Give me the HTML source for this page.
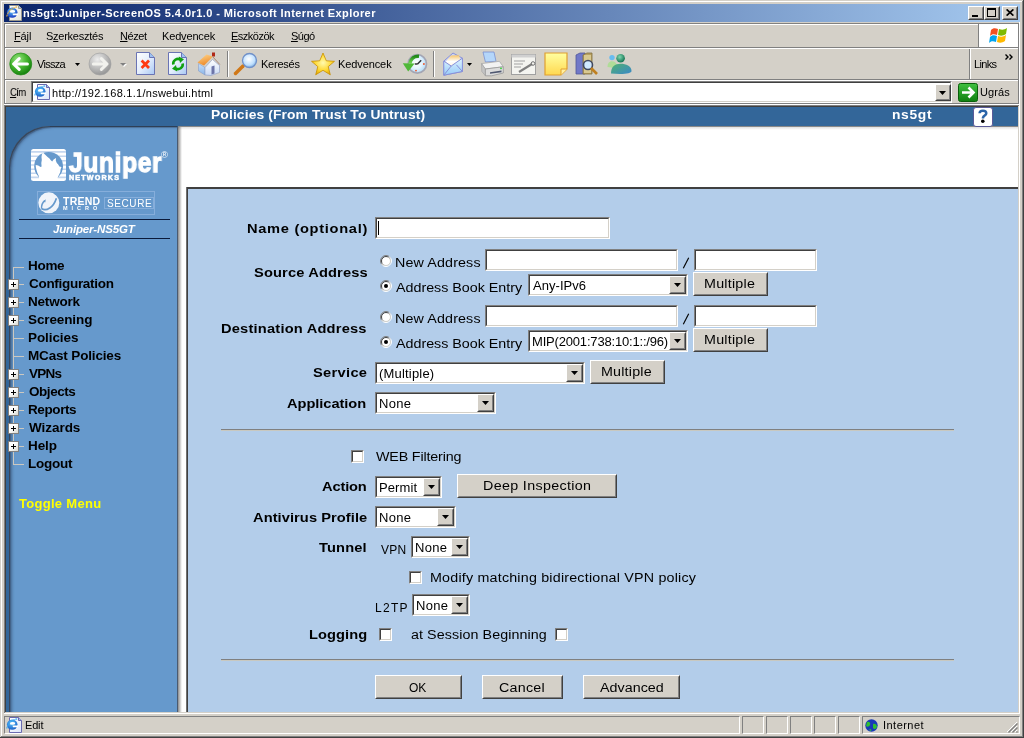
<!DOCTYPE html>
<html><head><meta charset="utf-8"><style>
html,body{margin:0;padding:0}
body{width:1024px;height:738px;overflow:hidden;position:relative;background:#D4D0C8;font-family:"Liberation Sans",sans-serif}
body div, body svg{position:absolute}
body>div[style*="font-family"]{will-change:transform}
u{text-decoration:underline;text-underline-offset:1px}
</style></head><body>
<div style="left:0px;top:0px;width:1024px;height:1px;background:#D4D0C8;"></div>
<div style="left:0px;top:0px;width:1px;height:738px;background:#D4D0C8;"></div>
<div style="left:1px;top:1px;width:1022px;height:1px;background:#fff;"></div>
<div style="left:1px;top:1px;width:1px;height:736px;background:#fff;"></div>
<div style="left:1023px;top:0px;width:1px;height:738px;background:#404040;"></div>
<div style="left:0px;top:737px;width:1024px;height:1px;background:#404040;"></div>
<div style="left:1022px;top:1px;width:1px;height:736px;background:#808080;"></div>
<div style="left:1px;top:736px;width:1022px;height:1px;background:#808080;"></div>
<div style="left:4px;top:4px;width:1016px;height:18px;background:linear-gradient(to right,#0A246A,#A6CAF0);"></div>
<svg style="left:6px;top:5px" width="17" height="17" viewBox="0 0 17 17">
<defs><linearGradient id="iep6005" x1="0" y1="0" x2="1" y2="1"><stop offset="0" stop-color="#FFFFFF"/><stop offset="1" stop-color="#E6E4DA"/></linearGradient>
<radialGradient id="iee6005" cx="45%" cy="35%" r="65%"><stop offset="0" stop-color="#60C8FF"/><stop offset="1" stop-color="#1838C0"/></radialGradient></defs>
<path d="M3.5 0.5H12.5L15.5 3.5V15.5H3.5Z" fill="url(#iep6005)" stroke="#9A988C"/>
<path d="M12.5 0.5V3.5H15.5" fill="#A0C0F0" stroke="#9A988C"/>
<ellipse cx="6.2" cy="7.6" rx="5.3" ry="5.2" fill="url(#iee6005)"/>
<ellipse cx="6.4" cy="6.4" rx="2.8" ry="1.3" fill="#fff"/>
<path d="M6.5 8.6H12V10.3H7Z" fill="#fff"/>
<path d="M0.8 11.5C1.5 7 6 2.5 11.5 1.8" stroke="#E8B040" stroke-width="1.1" fill="none" stroke-dasharray="2 0.6"/>
</svg>
<div style="left:968px;top:6px;width:16px;height:14px;box-sizing:border-box;border:1px solid;border-color:#fff #404040 #404040 #fff;"><div style="position:static;box-sizing:border-box;width:100%;height:100%;border:1px solid;border-color:#D4D0C8 #808080 #808080 #D4D0C8;background:#D4D0C8"></div></div>
<div style="left:984px;top:6px;width:16px;height:14px;box-sizing:border-box;border:1px solid;border-color:#fff #404040 #404040 #fff;"><div style="position:static;box-sizing:border-box;width:100%;height:100%;border:1px solid;border-color:#D4D0C8 #808080 #808080 #D4D0C8;background:#D4D0C8"></div></div>
<div style="left:1002px;top:6px;width:16px;height:14px;box-sizing:border-box;border:1px solid;border-color:#fff #404040 #404040 #fff;"><div style="position:static;box-sizing:border-box;width:100%;height:100%;border:1px solid;border-color:#D4D0C8 #808080 #808080 #D4D0C8;background:#D4D0C8"></div></div>
<div style="left:972px;top:15px;width:6px;height:2px;background:#000;"></div>
<div style="left:987px;top:8px;width:9px;height:9px;box-sizing:border-box;border:1px solid #000;border-top-width:2px"></div>
<svg style="left:1006px;top:9px" width="8" height="7" viewBox="0 0 8 7"><path d="M0.6 0.4L7.4 6.6M7.4 0.4L0.6 6.6" stroke="#000" stroke-width="1.7"/></svg>
<div style="left:4px;top:23px;width:1015px;height:1px;background:#808080;"></div>
<div style="left:4px;top:23px;width:1px;height:81px;background:#808080;"></div>
<div style="left:5px;top:24px;width:1014px;height:1px;background:#fff;"></div>
<div style="left:5px;top:24px;width:1px;height:80px;background:#fff;"></div>
<div style="left:5px;top:47px;width:1014px;height:1px;background:#808080;"></div>
<div style="left:5px;top:48px;width:1014px;height:1px;background:#fff;"></div>
<div style="left:5px;top:79px;width:1014px;height:1px;background:#808080;"></div>
<div style="left:5px;top:80px;width:1014px;height:1px;background:#fff;"></div>
<div style="left:5px;top:103px;width:1014px;height:1px;background:#808080;"></div>
<div style="left:4px;top:104px;width:1015px;height:1px;background:#fff;"></div>
<div style="left:1018px;top:23px;width:1px;height:81px;background:#808080;"></div>
<div style="left:1019px;top:22px;width:1px;height:83px;background:#fff;"></div>
<div style="left:979px;top:25px;width:39px;height:22px;background:#fff;"></div>
<div style="left:978px;top:24px;width:1px;height:23px;background:#808080;"></div>
<svg style="left:989px;top:27px" width="20" height="18" viewBox="0 0 20 18">
<path d="M2 3C4 1 6 1 9 2L8 8C5 7 3 7 1 9Z" fill="#F25022"/>
<path d="M10 2C13 3 15 3 18 1L17 7C14 9 12 9 9 8Z" fill="#7FBA00"/>
<path d="M1 10C3 8 5 8 8 9L7 15C4 14 2 14 0 16Z" fill="#00A4EF"/>
<path d="M9 9C12 10 14 10 17 8L16 14C13 16 11 16 8 15Z" fill="#FFB900"/>
</svg>
<div style="left:969px;top:49px;width:1px;height:30px;background:#808080;"></div>
<div style="left:970px;top:49px;width:1px;height:30px;background:#fff;"></div>
<svg style="left:9px;top:52px" width="24" height="24" viewBox="0 0 24 24">
<defs><radialGradient id="gb" cx="38%" cy="30%" r="70%"><stop offset="0" stop-color="#9BE585"/><stop offset="0.55" stop-color="#45B52E"/><stop offset="1" stop-color="#17830F"/></radialGradient></defs>
<circle cx="11.75" cy="12" r="11" fill="url(#gb)" stroke="#238A18" stroke-width="0.7"/>
<path d="M4.6 12L10.2 6.6M4.6 12L10.2 17.4M5.2 12H18.4" stroke="#fff" stroke-width="3.1" stroke-linecap="round" fill="none"/>
</svg>
<svg style="left:75px;top:63px" width="5" height="3"><path d="M0 0H5L2.5 3Z" fill="#000"/></svg>
<svg style="left:88px;top:52px" width="24" height="24" viewBox="0 0 24 24">
<defs><radialGradient id="gf" cx="38%" cy="30%" r="70%"><stop offset="0" stop-color="#EDEDED"/><stop offset="0.55" stop-color="#BEBEBE"/><stop offset="1" stop-color="#979797"/></radialGradient></defs>
<circle cx="12" cy="12" r="11" fill="url(#gf)" stroke="#A4A4A4" stroke-width="0.7"/>
<path d="M19 12L13.4 6.6M19 12L13.4 17.4M18.4 12H5.4" stroke="#F2F2EE" stroke-width="3.1" stroke-linecap="round" fill="none"/>
</svg>
<svg style="left:120px;top:63px" width="7" height="5"><path d="M1 1H7L4 4Z" fill="#fff"/><path d="M0 0H6L3 3Z" fill="#808080"/></svg>
<svg style="left:136px;top:52px" width="20" height="23" viewBox="0 0 20 23">
<defs><linearGradient id="dg136" x1="0" y1="0" x2="1" y2="1"><stop offset="0" stop-color="#FFFFFF"/><stop offset="0.5" stop-color="#E4EEFC"/><stop offset="1" stop-color="#A8C8F4"/></linearGradient></defs>
<path d="M0.5 0.5H13.5L18.5 5.5V22.5H0.5Z" fill="url(#dg136)" stroke="#6A74B4"/>
<path d="M13.5 0.5V5.5H18.5" fill="#9EC2F0" stroke="#6A74B4"/>
<path d="M5.6 8.6L13 16M13 8.6L5.6 16" stroke="#FF3A12" stroke-width="2.8"/></svg>
<svg style="left:168px;top:52px" width="20" height="23" viewBox="0 0 20 23">
<defs><linearGradient id="dg168" x1="0" y1="0" x2="1" y2="1"><stop offset="0" stop-color="#FFFFFF"/><stop offset="0.5" stop-color="#E4EEFC"/><stop offset="1" stop-color="#A8C8F4"/></linearGradient></defs>
<path d="M0.5 0.5H13.5L18.5 5.5V22.5H0.5Z" fill="url(#dg168)" stroke="#6A74B4"/>
<path d="M13.5 0.5V5.5H18.5" fill="#9EC2F0" stroke="#6A74B4"/>

<path d="M5.3 12.5A4.8 4.8 0 0 1 12.5 7.6" stroke="#10A010" stroke-width="2.6" fill="none"/>
<path d="M10.8 4.6L16 7.2L12 11Z" fill="#10A010"/>
<path d="M14.7 11.5A4.8 4.8 0 0 1 7.5 16.4" stroke="#10A010" stroke-width="2.6" fill="none"/>
<path d="M9.2 19.4L4 16.8L8 13Z" fill="#10A010"/>
</svg>
<svg style="left:197px;top:52px" width="24" height="24" viewBox="0 0 24 24">
<defs><linearGradient id="hr" x1="0" y1="0" x2="0.4" y2="1"><stop offset="0" stop-color="#FFD890"/><stop offset="1" stop-color="#EE8A28"/></linearGradient>
<linearGradient id="hw" x1="0" y1="0" x2="0" y2="1"><stop offset="0" stop-color="#FFFFFF"/><stop offset="1" stop-color="#C8D8F4"/></linearGradient>
<linearGradient id="hs" x1="0" y1="0" x2="0" y2="1"><stop offset="0" stop-color="#C8E0FA"/><stop offset="1" stop-color="#88B4E8"/></linearGradient></defs>
<rect x="15" y="0.5" width="3" height="4" fill="#B02818"/>
<path d="M1.5 11.5L8 15.5V23L1.5 19Z" fill="url(#hs)" stroke="#8CA0C8" stroke-width="0.6"/>
<path d="M8 15.5L15.5 7.5L22.5 13.5V20.5L14 23.5L8 23Z" fill="url(#hw)" stroke="#8C9CC4" stroke-width="0.6"/>
<path d="M0.5 10.5L9.5 2.5L16 4.5L7 13.5Z" fill="url(#hr)"/>
<path d="M15.5 4.5L22.8 12.5" stroke="#A88878" stroke-width="1"/>
<path d="M14.5 14.5L17.5 13.5V21.5L14.5 22.5Z" fill="#6C74A8"/>
</svg>
<div style="left:227px;top:51px;width:1px;height:26px;background:#808080;"></div>
<div style="left:228px;top:51px;width:1px;height:26px;background:#fff;"></div>
<svg style="left:233px;top:52px" width="26" height="24" viewBox="0 0 26 24">
<defs><radialGradient id="sl" cx="45%" cy="40%" r="60%"><stop offset="0" stop-color="#FFFFFF"/><stop offset="0.7" stop-color="#BFE0FF"/><stop offset="1" stop-color="#80B0E0"/></radialGradient></defs>
<path d="M2.5 21.5L10 14" stroke="#D07818" stroke-width="3.5" stroke-linecap="round"/>
<circle cx="16.5" cy="8.5" r="7" fill="url(#sl)" stroke="#7090C8" stroke-width="1.3"/>
</svg>
<svg style="left:310px;top:52px" width="26" height="24" viewBox="0 0 26 24">
<defs><radialGradient id="st" cx="50%" cy="45%" r="60%"><stop offset="0" stop-color="#FFFAB0"/><stop offset="0.6" stop-color="#FFD830"/><stop offset="1" stop-color="#E0A000"/></radialGradient></defs>
<path d="M13 1L16.3 8.8L24.5 9.3L18.2 14.6L20.3 22.8L13 18.3L5.7 22.8L7.8 14.6L1.5 9.3L9.7 8.8Z" fill="url(#st)" stroke="#C89000" stroke-width="0.8" stroke-linejoin="round"/>
</svg>
<svg style="left:402px;top:53px" width="26" height="23" viewBox="0 0 26 23">
<defs><radialGradient id="hc" cx="45%" cy="45%" r="60%"><stop offset="0" stop-color="#FFFFFF"/><stop offset="0.5" stop-color="#E4F4FF"/><stop offset="1" stop-color="#A8D4F4"/></radialGradient>
<linearGradient id="ha" x1="0" y1="0" x2="0" y2="1"><stop offset="0" stop-color="#208A18"/><stop offset="1" stop-color="#78D858"/></linearGradient></defs>
<circle cx="15.3" cy="10.9" r="9.2" fill="url(#hc)" stroke="#A4A6B4" stroke-width="1.7"/>
<path d="M15.6 11L19.2 7.2M15.6 11L12.8 11" stroke="#303438" stroke-width="1.5"/>
<circle cx="21.9" cy="11" r="0.9" fill="#F05020"/><circle cx="14" cy="17.6" r="0.9" fill="#F05020"/>
<path d="M17 3.3C12.5 3 8.8 5.5 7.8 10.5" stroke="url(#ha)" stroke-width="3.6" fill="none"/>
<path d="M0.8 10.2L12.6 10.6L6.2 18.4Z" fill="#50B838"/>
</svg>
<div style="left:433px;top:51px;width:1px;height:26px;background:#808080;"></div>
<div style="left:434px;top:51px;width:1px;height:26px;background:#fff;"></div>
<svg style="left:442px;top:52px" width="23" height="25" viewBox="0 0 23 25">
<defs><linearGradient id="mb" x1="0" y1="0" x2="0" y2="1"><stop offset="0" stop-color="#E0F4FF"/><stop offset="1" stop-color="#98CCF8"/></linearGradient>
<linearGradient id="ml" x1="0" y1="0" x2="0" y2="1"><stop offset="0" stop-color="#F8C468"/><stop offset="0.55" stop-color="#FFFFFF"/><stop offset="1" stop-color="#FFF4E0"/></linearGradient></defs>
<path d="M1.8 9.1L11 1L20.4 6.2V19.5L1.8 23.2Z" fill="#C8D4F4" stroke="#8890D8"/>
<path d="M3.5 10L9 3.5L17 3.2L19 9L9.5 14.5Z" fill="url(#ml)"/>
<path d="M1.8 9.1L9.2 14L20.4 6.2V19.5L1.8 23.2Z" fill="url(#mb)" stroke="#8890D8" stroke-linejoin="round"/>
<path d="M1.8 23.2L9.2 14M20.4 19.5L14.4 12.8" stroke="#8890D8" fill="none"/>
</svg>
<svg style="left:467px;top:63px" width="5" height="3"><path d="M0 0H5L2.5 3Z" fill="#000"/></svg>
<svg style="left:480px;top:51px" width="25" height="26" viewBox="0 0 25 26">
<path d="M3 1L14 1L16 10.3L5.4 11Z" fill="#B4D6FA" stroke="#7890D0" stroke-width="0.8"/>
<path d="M1.5 12.6L19.4 10.3L23.3 15.75L5.4 18Z" fill="#F2F2F2" stroke="#A8A8A8" stroke-width="0.8"/>
<path d="M1.5 12.6L5.4 18V24.8L1.8 20.4Z" fill="#C4C4C4" stroke="#A0A0A0" stroke-width="0.6"/>
<path d="M5.4 18L23.3 15.75V22L11.6 24.8H5.4Z" fill="#DCDCDC" stroke="#989898" stroke-width="0.8"/>
<path d="M10 21.2L21.5 19.6V21.2L10 22.8Z" fill="#505870"/>
<circle cx="21" cy="17.3" r="0.9" fill="#30D030"/>
</svg>
<svg style="left:511px;top:54px" width="25" height="21" viewBox="0 0 25 21">
<rect x="0.5" y="0.5" width="24" height="20" fill="#F4F4F0" stroke="#A0A0A0"/>
<rect x="0.5" y="0.5" width="24" height="3" fill="#D0D0D0"/>
<path d="M3 7H14M3 10H12M3 13H10" stroke="#A0A0A0"/>
<path d="M8 18L21 10" stroke="#808080" stroke-width="2.2"/>
<circle cx="22" cy="9.5" r="1.8" fill="none" stroke="#707070"/>
</svg>
<svg style="left:544px;top:52px" width="24" height="24" viewBox="0 0 24 24">
<defs><linearGradient id="sn" x1="0" y1="0" x2="0" y2="1"><stop offset="0" stop-color="#FFFFA0"/><stop offset="1" stop-color="#FFD850"/></linearGradient></defs>
<path d="M1 1H23V17L17 23H1Z" fill="url(#sn)" stroke="#E0A030" stroke-width="1.2"/>
<path d="M17 23V17H23" fill="#FFF0A0" stroke="#E0A030"/>
</svg>
<svg style="left:575px;top:52px" width="24" height="23" viewBox="0 0 24 23">
<path d="M1 3L5 1H10V22H1Z" fill="#7078C8" stroke="#505898" stroke-width="0.8"/>
<path d="M8 3L12 1H17V22H8Z" fill="#B8A060" stroke="#807040" stroke-width="0.8"/>
<path d="M9 3H16V21H9Z" fill="#D8C890"/>
<circle cx="13" cy="13" r="4.5" fill="#D0E8FF" stroke="#404860" stroke-width="1.6"/>
<path d="M16 16L22 22" stroke="#C08020" stroke-width="2.6"/>
</svg>
<svg style="left:607px;top:53px" width="26" height="22" viewBox="0 0 26 22">
<defs><radialGradient id="mh" cx="40%" cy="35%" r="60%"><stop offset="0" stop-color="#80D8B0"/><stop offset="1" stop-color="#1A7A58"/></radialGradient>
<linearGradient id="mbd" x1="0" y1="0" x2="1" y2="1"><stop offset="0" stop-color="#50B070"/><stop offset="1" stop-color="#3A88C8"/></linearGradient></defs>
<circle cx="5" cy="4.6" r="2.7" fill="#68BCF0"/>
<path d="M0.5 14C0.5 9.5 2.8 8.2 5 8.2C7.5 8.2 9.5 9.5 10 13L8 15Z" fill="#B0DC98"/>
<circle cx="13.6" cy="5.3" r="4.3" fill="url(#mh)"/>
<path d="M4 20.5C4 13.5 8 10.8 13.6 10.8C19 10.8 24.5 13 24.5 18C24.5 20 20 21 13 21Z" fill="url(#mbd)"/>
</svg>
<svg style="left:1005px;top:54px" width="10" height="6" viewBox="0 0 10 6"><path d="M0.5 0.5L3 3L0.5 5.5M4.5 0.5L7 3L4.5 5.5" stroke="#000" stroke-width="1.4" fill="none"/></svg>
<div style="left:31px;top:81px;width:921px;height:22px;box-sizing:border-box;border:1px solid;border-color:#808080 #fff #fff #808080;"><div style="position:static;box-sizing:border-box;width:100%;height:100%;border:1px solid;border-color:#404040 #D4D0C8 #D4D0C8 #404040;background:#fff"></div></div>
<svg style="left:34px;top:84px" width="17" height="17" viewBox="0 0 17 17">
<defs><linearGradient id="iep34084" x1="0" y1="0" x2="1" y2="1"><stop offset="0" stop-color="#FFFFFF"/><stop offset="1" stop-color="#DDE6FA"/></linearGradient>
<radialGradient id="iee34084" cx="45%" cy="35%" r="65%"><stop offset="0" stop-color="#60C8FF"/><stop offset="1" stop-color="#1A60C8"/></radialGradient></defs>
<path d="M3.5 0.5H12.5L15.5 3.5V15.5H3.5Z" fill="url(#iep34084)" stroke="#6A6AB0"/>
<path d="M12.5 0.5V3.5H15.5" fill="#A0C0F0" stroke="#6A6AB0"/>
<ellipse cx="6.2" cy="7.6" rx="5.3" ry="5.2" fill="url(#iee34084)"/>
<ellipse cx="6.4" cy="6.4" rx="2.8" ry="1.3" fill="#fff"/>
<path d="M6.5 8.6H12V10.3H7Z" fill="#fff"/>
<path d="M0.8 11.5C1.5 7 6 2.5 11.5 1.8" stroke="#38A8F0" stroke-width="1.1" fill="none" stroke-dasharray="2 0.6"/>
</svg>
<div style="left:935px;top:84px;width:16px;height:17px;box-sizing:border-box;border:1px solid;border-color:#fff #404040 #404040 #fff;"><div style="position:static;box-sizing:border-box;width:100%;height:100%;border:1px solid;border-color:#D4D0C8 #808080 #808080 #D4D0C8;background:#D4D0C8"></div></div>
<svg style="left:939px;top:91px" width="7" height="4"><path d="M0 0H7L3.5 4Z" fill="#000"/></svg>
<svg style="left:958px;top:83px" width="20" height="19" viewBox="0 0 20 19">
<defs><linearGradient id="go" x1="0" y1="0" x2="0" y2="1"><stop offset="0" stop-color="#40C040"/><stop offset="1" stop-color="#108010"/></linearGradient></defs>
<rect x="0.5" y="0.5" width="19" height="18" rx="2" fill="url(#go)" stroke="#0A600A"/>
<path d="M4 9.5H15M10.5 4.5L15.5 9.5L10.5 14.5" stroke="#fff" stroke-width="2.6" fill="none"/>
</svg>
<div style="left:4px;top:105px;width:1016px;height:1px;background:#808080;"></div>
<div style="left:4px;top:105px;width:1px;height:609px;background:#808080;"></div>
<div style="left:5px;top:106px;width:1014px;height:1px;background:#404040;"></div>
<div style="left:5px;top:106px;width:1px;height:607px;background:#404040;"></div>
<div style="left:5px;top:712px;width:1014px;height:1px;background:#D4D0C8;"></div>
<div style="left:1018px;top:106px;width:1px;height:607px;background:#D4D0C8;"></div>
<div style="left:4px;top:713px;width:1016px;height:1px;background:#fff;"></div>
<div style="left:1019px;top:105px;width:1px;height:609px;background:#fff;"></div>
<div style="left:6px;top:107px;width:1012px;height:605px;background:#fff;"></div>
<div style="left:6px;top:107px;width:1012px;height:19px;background:#336699;"></div>
<div style="left:6px;top:107px;width:172px;height:605px;background:#336699;"></div>
<div style="left:9px;top:126px;width:168px;height:586px;background:#6699CC;border-top-left-radius:41px;box-shadow:inset 1px 1px 0 rgba(55,65,80,0.8), inset 2px 2px 0 rgba(50,70,100,0.3), inset 4px 2px 3px -1px rgba(40,60,90,0.5)"></div>
<div style="left:177px;top:127px;width:1px;height:585px;background:#4A5A70;"></div>
<div style="left:178px;top:127px;width:4px;height:585px;background:linear-gradient(to right,rgba(0,0,0,0.45),rgba(0,0,0,0));"></div>
<div style="left:178px;top:126px;width:840px;height:1px;background:rgba(40,40,40,0.55);"></div>
<div style="left:178px;top:127px;width:840px;height:3px;background:linear-gradient(to bottom,rgba(0,0,0,0.12),rgba(0,0,0,0));"></div>
<div style="left:50px;top:126px;width:128px;height:1px;background:rgba(20,40,70,0.3);"></div>
<div style="left:186px;top:187px;width:832px;height:525px;background:#B3CDEA;box-sizing:border-box;border-top:2px solid #404040;border-left:2px solid #404040"></div>
<div style="left:186px;top:187px;width:1px;height:525px;background:#707070;"></div>
<svg style="left:973px;top:107px" width="20" height="20" viewBox="0 0 20 20">
<rect x="0.5" y="0.5" width="19" height="19" rx="2.5" fill="#fff" stroke="#5A5A98"/>
<path d="M6.6 6.3C6.6 4.4 8.2 3.7 9.9 3.7C11.9 3.7 13.3 4.7 13.3 6.3C13.3 8.3 10.6 8.6 10 10.6V11.5" stroke="#2A64A8" stroke-width="2.5" fill="none"/>
<circle cx="9.8" cy="14.2" r="1.8" fill="#000"/>
</svg>
<svg style="left:31px;top:149px" width="35" height="32" viewBox="0 0 35 32">
<defs><clipPath id="cb"><rect x="0" y="0" width="35" height="32" rx="2.5"/></clipPath></defs>
<g clip-path="url(#cb)">
<rect x="0" y="0" width="35" height="32" fill="#fff"/>
<path d="M0 2.9H35M0 7.3H35M0 11.7H35M0 16H35M0 20.2H35M0 24.3H35M0 28.4H35" stroke="#C4D6EE" stroke-width="1.6"/>
<circle cx="17.6" cy="17.3" r="14.4" fill="#6699CC"/>
<path d="M11.9 3.4L14 5.5L16.6 8L18.5 9.6L19.8 11.2L21.2 12.4L22.6 10.5L25 9.1L24.8 11.5L25.8 14L27.2 15.6L28.4 17.6L30.5 18.1L29.6 20.5L29.3 23L28.2 25.5L26.9 27.9L26 33L8.5 33L7.8 26.9L6.4 24L5.5 21L4.9 18.5L4.7 16L7.2 16.6L9.6 18L10.6 17.6L10.3 14L10.8 11L10.5 8L10.9 5.2Z" fill="#fff"/>
</g>
</svg>
<div style="left:37px;top:191px;width:118px;height:24px;box-sizing:border-box;border:1px solid #86AEDB"></div>
<svg style="left:38px;top:192px" width="22" height="22" viewBox="0 0 22 22">
<circle cx="10.8" cy="10.8" r="10.5" fill="#F0F4FA"/>
<path d="M3.6 16.8C8.5 19.5 15.5 15.5 18.4 6.2" stroke="#6699CC" stroke-width="1.7" fill="none"/>
<path d="M3.6 16.8C3.3 13.5 4.5 10.5 6.8 8.6" stroke="#6699CC" stroke-width="1.5" fill="none"/>
<path d="M5.3 9.2L7.8 7.2L7.2 10.5Z" fill="#6699CC"/>
<path d="M16.5 1.2L19.5 3.5" stroke="#6699CC" stroke-width="1.2"/>
</svg>
<div style="left:104px;top:197px;width:50px;height:12px;box-sizing:border-box;border:1px solid #86AEDB"></div>
<div style="left:19px;top:219px;width:151px;height:1px;background:#0A1A3A;"></div>
<div style="left:19px;top:238px;width:151px;height:1px;background:#0A1A3A;"></div>
<div style="left:13px;top:267px;width:1px;height:198px;background:#CCC8C0;"></div>
<div style="left:13px;top:267px;width:11px;height:1px;background:#CCC8C0;"></div>
<div style="left:13px;top:284px;width:11px;height:1px;background:#CCC8C0;"></div>
<div style="left:8px;top:279px;width:11px;height:11px;box-sizing:border-box;border:1px solid #808080;background:linear-gradient(135deg,#fff 40%,#D8D8D0)"></div>
<div style="left:11px;top:284px;width:5px;height:1px;background:#000;"></div>
<div style="left:13px;top:282px;width:1px;height:5px;background:#000;"></div>
<div style="left:13px;top:302px;width:11px;height:1px;background:#CCC8C0;"></div>
<div style="left:8px;top:297px;width:11px;height:11px;box-sizing:border-box;border:1px solid #808080;background:linear-gradient(135deg,#fff 40%,#D8D8D0)"></div>
<div style="left:11px;top:302px;width:5px;height:1px;background:#000;"></div>
<div style="left:13px;top:300px;width:1px;height:5px;background:#000;"></div>
<div style="left:13px;top:320px;width:11px;height:1px;background:#CCC8C0;"></div>
<div style="left:8px;top:315px;width:11px;height:11px;box-sizing:border-box;border:1px solid #808080;background:linear-gradient(135deg,#fff 40%,#D8D8D0)"></div>
<div style="left:11px;top:320px;width:5px;height:1px;background:#000;"></div>
<div style="left:13px;top:318px;width:1px;height:5px;background:#000;"></div>
<div style="left:13px;top:338px;width:11px;height:1px;background:#CCC8C0;"></div>
<div style="left:13px;top:356px;width:11px;height:1px;background:#CCC8C0;"></div>
<div style="left:13px;top:374px;width:11px;height:1px;background:#CCC8C0;"></div>
<div style="left:8px;top:369px;width:11px;height:11px;box-sizing:border-box;border:1px solid #808080;background:linear-gradient(135deg,#fff 40%,#D8D8D0)"></div>
<div style="left:11px;top:374px;width:5px;height:1px;background:#000;"></div>
<div style="left:13px;top:372px;width:1px;height:5px;background:#000;"></div>
<div style="left:13px;top:392px;width:11px;height:1px;background:#CCC8C0;"></div>
<div style="left:8px;top:387px;width:11px;height:11px;box-sizing:border-box;border:1px solid #808080;background:linear-gradient(135deg,#fff 40%,#D8D8D0)"></div>
<div style="left:11px;top:392px;width:5px;height:1px;background:#000;"></div>
<div style="left:13px;top:390px;width:1px;height:5px;background:#000;"></div>
<div style="left:13px;top:410px;width:11px;height:1px;background:#CCC8C0;"></div>
<div style="left:8px;top:405px;width:11px;height:11px;box-sizing:border-box;border:1px solid #808080;background:linear-gradient(135deg,#fff 40%,#D8D8D0)"></div>
<div style="left:11px;top:410px;width:5px;height:1px;background:#000;"></div>
<div style="left:13px;top:408px;width:1px;height:5px;background:#000;"></div>
<div style="left:13px;top:428px;width:11px;height:1px;background:#CCC8C0;"></div>
<div style="left:8px;top:423px;width:11px;height:11px;box-sizing:border-box;border:1px solid #808080;background:linear-gradient(135deg,#fff 40%,#D8D8D0)"></div>
<div style="left:11px;top:428px;width:5px;height:1px;background:#000;"></div>
<div style="left:13px;top:426px;width:1px;height:5px;background:#000;"></div>
<div style="left:13px;top:446px;width:11px;height:1px;background:#CCC8C0;"></div>
<div style="left:8px;top:441px;width:11px;height:11px;box-sizing:border-box;border:1px solid #808080;background:linear-gradient(135deg,#fff 40%,#D8D8D0)"></div>
<div style="left:11px;top:446px;width:5px;height:1px;background:#000;"></div>
<div style="left:13px;top:444px;width:1px;height:5px;background:#000;"></div>
<div style="left:13px;top:464px;width:11px;height:1px;background:#CCC8C0;"></div>
<div style="left:375px;top:217px;width:235px;height:22px;box-sizing:border-box;border:1px solid;border-color:#808080 #fff #fff #808080;"><div style="position:static;box-sizing:border-box;width:100%;height:100%;border:1px solid;border-color:#404040 #D4D0C8 #D4D0C8 #404040;background:#fff"></div></div>
<div style="left:378px;top:221px;width:1px;height:14px;background:#000;"></div>
<svg style="left:380px;top:255px" width="12" height="12" viewBox="0 0 12 12">
<defs><clipPath id="rtl380255"><path d="M0 0H12V1.5L1.5 12H0Z"/></clipPath><clipPath id="rbr380255"><path d="M12 12H0V10.5L10.5 0H12Z"/></clipPath></defs>
<circle cx="6" cy="6" r="4.6" fill="#fff"/>
<circle cx="6" cy="6" r="5.5" fill="none" stroke="#808080" clip-path="url(#rtl380255)"/>
<circle cx="6" cy="6" r="4.5" fill="none" stroke="#404040" clip-path="url(#rtl380255)"/>
<circle cx="6" cy="6" r="5.5" fill="none" stroke="#fff" clip-path="url(#rbr380255)"/>
<circle cx="6" cy="6" r="4.5" fill="none" stroke="#D4D0C8" clip-path="url(#rbr380255)"/>
</svg>
<div style="left:485px;top:249px;width:193px;height:22px;box-sizing:border-box;border:1px solid;border-color:#808080 #fff #fff #808080;"><div style="position:static;box-sizing:border-box;width:100%;height:100%;border:1px solid;border-color:#404040 #D4D0C8 #D4D0C8 #404040;background:#fff"></div></div>
<svg style="left:682px;top:257px" width="8" height="12" viewBox="0 0 8 12"><path d="M1.3 11.3L6.7 0.7" stroke="#000" stroke-width="1.15"/></svg>
<div style="left:694px;top:249px;width:123px;height:22px;box-sizing:border-box;border:1px solid;border-color:#808080 #fff #fff #808080;"><div style="position:static;box-sizing:border-box;width:100%;height:100%;border:1px solid;border-color:#404040 #D4D0C8 #D4D0C8 #404040;background:#fff"></div></div>
<svg style="left:380px;top:280px" width="12" height="12" viewBox="0 0 12 12">
<defs><clipPath id="rtl380280"><path d="M0 0H12V1.5L1.5 12H0Z"/></clipPath><clipPath id="rbr380280"><path d="M12 12H0V10.5L10.5 0H12Z"/></clipPath></defs>
<circle cx="6" cy="6" r="4.6" fill="#fff"/>
<circle cx="6" cy="6" r="5.5" fill="none" stroke="#808080" clip-path="url(#rtl380280)"/>
<circle cx="6" cy="6" r="4.5" fill="none" stroke="#404040" clip-path="url(#rtl380280)"/>
<circle cx="6" cy="6" r="5.5" fill="none" stroke="#fff" clip-path="url(#rbr380280)"/>
<circle cx="6" cy="6" r="4.5" fill="none" stroke="#D4D0C8" clip-path="url(#rbr380280)"/>
<circle cx="6" cy="6" r="2" fill="#000"/></svg>
<div style="left:528px;top:274px;width:160px;height:22px;box-sizing:border-box;border:1px solid;border-color:#808080 #fff #fff #808080;"><div style="position:static;box-sizing:border-box;width:100%;height:100%;border:1px solid;border-color:#404040 #D4D0C8 #D4D0C8 #404040;background:#fff"></div></div>
<div style="left:669px;top:276px;width:17px;height:18px;box-sizing:border-box;border:1px solid;border-color:#fff #404040 #404040 #fff;"><div style="position:static;box-sizing:border-box;width:100%;height:100%;border:1px solid;border-color:#D4D0C8 #808080 #808080 #D4D0C8;background:#D4D0C8"></div></div>
<svg style="left:674px;top:283px" width="7" height="4"><path d="M0 0H7L3.5 4Z" fill="#000"/></svg>
<div style="left:693px;top:272px;width:75px;height:24px;box-sizing:border-box;border:1px solid;border-color:#fff #404040 #404040 #fff;"><div style="position:static;box-sizing:border-box;width:100%;height:100%;border:1px solid;border-color:#D4D0C8 #808080 #808080 #D4D0C8;background:#D4D0C8"></div></div>
<svg style="left:380px;top:311px" width="12" height="12" viewBox="0 0 12 12">
<defs><clipPath id="rtl380311"><path d="M0 0H12V1.5L1.5 12H0Z"/></clipPath><clipPath id="rbr380311"><path d="M12 12H0V10.5L10.5 0H12Z"/></clipPath></defs>
<circle cx="6" cy="6" r="4.6" fill="#fff"/>
<circle cx="6" cy="6" r="5.5" fill="none" stroke="#808080" clip-path="url(#rtl380311)"/>
<circle cx="6" cy="6" r="4.5" fill="none" stroke="#404040" clip-path="url(#rtl380311)"/>
<circle cx="6" cy="6" r="5.5" fill="none" stroke="#fff" clip-path="url(#rbr380311)"/>
<circle cx="6" cy="6" r="4.5" fill="none" stroke="#D4D0C8" clip-path="url(#rbr380311)"/>
</svg>
<div style="left:485px;top:305px;width:193px;height:22px;box-sizing:border-box;border:1px solid;border-color:#808080 #fff #fff #808080;"><div style="position:static;box-sizing:border-box;width:100%;height:100%;border:1px solid;border-color:#404040 #D4D0C8 #D4D0C8 #404040;background:#fff"></div></div>
<svg style="left:682px;top:313px" width="8" height="12" viewBox="0 0 8 12"><path d="M1.3 11.3L6.7 0.7" stroke="#000" stroke-width="1.15"/></svg>
<div style="left:694px;top:305px;width:123px;height:22px;box-sizing:border-box;border:1px solid;border-color:#808080 #fff #fff #808080;"><div style="position:static;box-sizing:border-box;width:100%;height:100%;border:1px solid;border-color:#404040 #D4D0C8 #D4D0C8 #404040;background:#fff"></div></div>
<svg style="left:380px;top:336px" width="12" height="12" viewBox="0 0 12 12">
<defs><clipPath id="rtl380336"><path d="M0 0H12V1.5L1.5 12H0Z"/></clipPath><clipPath id="rbr380336"><path d="M12 12H0V10.5L10.5 0H12Z"/></clipPath></defs>
<circle cx="6" cy="6" r="4.6" fill="#fff"/>
<circle cx="6" cy="6" r="5.5" fill="none" stroke="#808080" clip-path="url(#rtl380336)"/>
<circle cx="6" cy="6" r="4.5" fill="none" stroke="#404040" clip-path="url(#rtl380336)"/>
<circle cx="6" cy="6" r="5.5" fill="none" stroke="#fff" clip-path="url(#rbr380336)"/>
<circle cx="6" cy="6" r="4.5" fill="none" stroke="#D4D0C8" clip-path="url(#rbr380336)"/>
<circle cx="6" cy="6" r="2" fill="#000"/></svg>
<div style="left:528px;top:330px;width:160px;height:22px;box-sizing:border-box;border:1px solid;border-color:#808080 #fff #fff #808080;"><div style="position:static;box-sizing:border-box;width:100%;height:100%;border:1px solid;border-color:#404040 #D4D0C8 #D4D0C8 #404040;background:#fff"></div></div>
<div style="left:669px;top:332px;width:17px;height:18px;box-sizing:border-box;border:1px solid;border-color:#fff #404040 #404040 #fff;"><div style="position:static;box-sizing:border-box;width:100%;height:100%;border:1px solid;border-color:#D4D0C8 #808080 #808080 #D4D0C8;background:#D4D0C8"></div></div>
<svg style="left:674px;top:339px" width="7" height="4"><path d="M0 0H7L3.5 4Z" fill="#000"/></svg>
<div style="left:693px;top:328px;width:75px;height:24px;box-sizing:border-box;border:1px solid;border-color:#fff #404040 #404040 #fff;"><div style="position:static;box-sizing:border-box;width:100%;height:100%;border:1px solid;border-color:#D4D0C8 #808080 #808080 #D4D0C8;background:#D4D0C8"></div></div>
<div style="left:375px;top:362px;width:210px;height:22px;box-sizing:border-box;border:1px solid;border-color:#808080 #fff #fff #808080;"><div style="position:static;box-sizing:border-box;width:100%;height:100%;border:1px solid;border-color:#404040 #D4D0C8 #D4D0C8 #404040;background:#fff"></div></div>
<div style="left:566px;top:364px;width:17px;height:18px;box-sizing:border-box;border:1px solid;border-color:#fff #404040 #404040 #fff;"><div style="position:static;box-sizing:border-box;width:100%;height:100%;border:1px solid;border-color:#D4D0C8 #808080 #808080 #D4D0C8;background:#D4D0C8"></div></div>
<svg style="left:571px;top:371px" width="7" height="4"><path d="M0 0H7L3.5 4Z" fill="#000"/></svg>
<div style="left:590px;top:360px;width:75px;height:24px;box-sizing:border-box;border:1px solid;border-color:#fff #404040 #404040 #fff;"><div style="position:static;box-sizing:border-box;width:100%;height:100%;border:1px solid;border-color:#D4D0C8 #808080 #808080 #D4D0C8;background:#D4D0C8"></div></div>
<div style="left:375px;top:392px;width:121px;height:22px;box-sizing:border-box;border:1px solid;border-color:#808080 #fff #fff #808080;"><div style="position:static;box-sizing:border-box;width:100%;height:100%;border:1px solid;border-color:#404040 #D4D0C8 #D4D0C8 #404040;background:#fff"></div></div>
<div style="left:477px;top:394px;width:17px;height:18px;box-sizing:border-box;border:1px solid;border-color:#fff #404040 #404040 #fff;"><div style="position:static;box-sizing:border-box;width:100%;height:100%;border:1px solid;border-color:#D4D0C8 #808080 #808080 #D4D0C8;background:#D4D0C8"></div></div>
<svg style="left:482px;top:401px" width="7" height="4"><path d="M0 0H7L3.5 4Z" fill="#000"/></svg>
<div style="left:221px;top:429px;width:733px;height:1px;background:#808080;"></div>
<div style="left:221px;top:430px;width:733px;height:1px;background:#C8C8C0;"></div>
<div style="left:351px;top:450px;width:13px;height:13px;box-sizing:border-box;border:1px solid;border-color:#808080 #fff #fff #808080;"><div style="position:static;box-sizing:border-box;width:100%;height:100%;border:1px solid;border-color:#404040 #D4D0C8 #D4D0C8 #404040;background:#fff"></div></div>
<div style="left:375px;top:476px;width:67px;height:22px;box-sizing:border-box;border:1px solid;border-color:#808080 #fff #fff #808080;"><div style="position:static;box-sizing:border-box;width:100%;height:100%;border:1px solid;border-color:#404040 #D4D0C8 #D4D0C8 #404040;background:#fff"></div></div>
<div style="left:423px;top:478px;width:17px;height:18px;box-sizing:border-box;border:1px solid;border-color:#fff #404040 #404040 #fff;"><div style="position:static;box-sizing:border-box;width:100%;height:100%;border:1px solid;border-color:#D4D0C8 #808080 #808080 #D4D0C8;background:#D4D0C8"></div></div>
<svg style="left:428px;top:485px" width="7" height="4"><path d="M0 0H7L3.5 4Z" fill="#000"/></svg>
<div style="left:457px;top:474px;width:160px;height:24px;box-sizing:border-box;border:1px solid;border-color:#fff #404040 #404040 #fff;"><div style="position:static;box-sizing:border-box;width:100%;height:100%;border:1px solid;border-color:#D4D0C8 #808080 #808080 #D4D0C8;background:#D4D0C8"></div></div>
<div style="left:375px;top:506px;width:81px;height:22px;box-sizing:border-box;border:1px solid;border-color:#808080 #fff #fff #808080;"><div style="position:static;box-sizing:border-box;width:100%;height:100%;border:1px solid;border-color:#404040 #D4D0C8 #D4D0C8 #404040;background:#fff"></div></div>
<div style="left:437px;top:508px;width:17px;height:18px;box-sizing:border-box;border:1px solid;border-color:#fff #404040 #404040 #fff;"><div style="position:static;box-sizing:border-box;width:100%;height:100%;border:1px solid;border-color:#D4D0C8 #808080 #808080 #D4D0C8;background:#D4D0C8"></div></div>
<svg style="left:442px;top:515px" width="7" height="4"><path d="M0 0H7L3.5 4Z" fill="#000"/></svg>
<div style="left:411px;top:536px;width:59px;height:22px;box-sizing:border-box;border:1px solid;border-color:#808080 #fff #fff #808080;"><div style="position:static;box-sizing:border-box;width:100%;height:100%;border:1px solid;border-color:#404040 #D4D0C8 #D4D0C8 #404040;background:#fff"></div></div>
<div style="left:451px;top:538px;width:17px;height:18px;box-sizing:border-box;border:1px solid;border-color:#fff #404040 #404040 #fff;"><div style="position:static;box-sizing:border-box;width:100%;height:100%;border:1px solid;border-color:#D4D0C8 #808080 #808080 #D4D0C8;background:#D4D0C8"></div></div>
<svg style="left:456px;top:545px" width="7" height="4"><path d="M0 0H7L3.5 4Z" fill="#000"/></svg>
<div style="left:409px;top:571px;width:13px;height:13px;box-sizing:border-box;border:1px solid;border-color:#808080 #fff #fff #808080;"><div style="position:static;box-sizing:border-box;width:100%;height:100%;border:1px solid;border-color:#404040 #D4D0C8 #D4D0C8 #404040;background:#fff"></div></div>
<div style="left:412px;top:594px;width:58px;height:22px;box-sizing:border-box;border:1px solid;border-color:#808080 #fff #fff #808080;"><div style="position:static;box-sizing:border-box;width:100%;height:100%;border:1px solid;border-color:#404040 #D4D0C8 #D4D0C8 #404040;background:#fff"></div></div>
<div style="left:451px;top:596px;width:17px;height:18px;box-sizing:border-box;border:1px solid;border-color:#fff #404040 #404040 #fff;"><div style="position:static;box-sizing:border-box;width:100%;height:100%;border:1px solid;border-color:#D4D0C8 #808080 #808080 #D4D0C8;background:#D4D0C8"></div></div>
<svg style="left:456px;top:603px" width="7" height="4"><path d="M0 0H7L3.5 4Z" fill="#000"/></svg>
<div style="left:379px;top:628px;width:13px;height:13px;box-sizing:border-box;border:1px solid;border-color:#808080 #fff #fff #808080;"><div style="position:static;box-sizing:border-box;width:100%;height:100%;border:1px solid;border-color:#404040 #D4D0C8 #D4D0C8 #404040;background:#fff"></div></div>
<div style="left:555px;top:628px;width:13px;height:13px;box-sizing:border-box;border:1px solid;border-color:#808080 #fff #fff #808080;"><div style="position:static;box-sizing:border-box;width:100%;height:100%;border:1px solid;border-color:#404040 #D4D0C8 #D4D0C8 #404040;background:#fff"></div></div>
<div style="left:221px;top:659px;width:733px;height:1px;background:#808080;"></div>
<div style="left:221px;top:660px;width:733px;height:1px;background:#C8C8C0;"></div>
<div style="left:375px;top:675px;width:87px;height:24px;box-sizing:border-box;border:1px solid;border-color:#fff #404040 #404040 #fff;"><div style="position:static;box-sizing:border-box;width:100%;height:100%;border:1px solid;border-color:#D4D0C8 #808080 #808080 #D4D0C8;background:#D4D0C8"></div></div>
<div style="left:482px;top:675px;width:81px;height:24px;box-sizing:border-box;border:1px solid;border-color:#fff #404040 #404040 #fff;"><div style="position:static;box-sizing:border-box;width:100%;height:100%;border:1px solid;border-color:#D4D0C8 #808080 #808080 #D4D0C8;background:#D4D0C8"></div></div>
<div style="left:583px;top:675px;width:97px;height:24px;box-sizing:border-box;border:1px solid;border-color:#fff #404040 #404040 #fff;"><div style="position:static;box-sizing:border-box;width:100%;height:100%;border:1px solid;border-color:#D4D0C8 #808080 #808080 #D4D0C8;background:#D4D0C8"></div></div>
<div style="left:4px;top:716px;width:736px;height:18px;box-sizing:border-box;border:1px solid;border-color:#808080 #fff #fff #808080"></div>
<div style="left:742px;top:716px;width:22px;height:18px;box-sizing:border-box;border:1px solid;border-color:#808080 #fff #fff #808080"></div>
<div style="left:766px;top:716px;width:22px;height:18px;box-sizing:border-box;border:1px solid;border-color:#808080 #fff #fff #808080"></div>
<div style="left:790px;top:716px;width:22px;height:18px;box-sizing:border-box;border:1px solid;border-color:#808080 #fff #fff #808080"></div>
<div style="left:814px;top:716px;width:22px;height:18px;box-sizing:border-box;border:1px solid;border-color:#808080 #fff #fff #808080"></div>
<div style="left:838px;top:716px;width:22px;height:18px;box-sizing:border-box;border:1px solid;border-color:#808080 #fff #fff #808080"></div>
<div style="left:862px;top:716px;width:158px;height:18px;box-sizing:border-box;border:1px solid;border-color:#808080 #fff #fff #808080"></div>
<svg style="left:6px;top:717px" width="17" height="17" viewBox="0 0 17 17">
<defs><linearGradient id="iep6717" x1="0" y1="0" x2="1" y2="1"><stop offset="0" stop-color="#FFFFFF"/><stop offset="1" stop-color="#DDE6FA"/></linearGradient>
<radialGradient id="iee6717" cx="45%" cy="35%" r="65%"><stop offset="0" stop-color="#60C8FF"/><stop offset="1" stop-color="#1A60C8"/></radialGradient></defs>
<path d="M3.5 0.5H12.5L15.5 3.5V15.5H3.5Z" fill="url(#iep6717)" stroke="#6A6AB0"/>
<path d="M12.5 0.5V3.5H15.5" fill="#A0C0F0" stroke="#6A6AB0"/>
<ellipse cx="6.2" cy="7.6" rx="5.3" ry="5.2" fill="url(#iee6717)"/>
<ellipse cx="6.4" cy="6.4" rx="2.8" ry="1.3" fill="#fff"/>
<path d="M6.5 8.6H12V10.3H7Z" fill="#fff"/>
<path d="M0.8 11.5C1.5 7 6 2.5 11.5 1.8" stroke="#38A8F0" stroke-width="1.1" fill="none" stroke-dasharray="2 0.6"/>
</svg>
<svg style="left:865px;top:719px" width="13" height="13" viewBox="0 0 13 13">
<circle cx="6.5" cy="6.5" r="6.2" fill="#1A3AB8"/>
<path d="M2 3C4 2 6 4 5 6C4 8 2 8 1 7Z" fill="#30C030"/>
<path d="M8 5C10 4 12 6 12 8C11 10 9 11 8 9Z" fill="#30C030"/>
<path d="M5 10C6 10 7 11 6 12L4 11Z" fill="#30C030"/>
</svg>
<svg style="left:1006px;top:721px" width="12" height="12" viewBox="0 0 12 12">
<path d="M11 1L1 11M11 5L5 11M11 9L9 11" stroke="#fff" stroke-width="1"/>
<path d="M11.5 2.5L2.5 11.5M11.5 6.5L6.5 11.5M11.5 10.5L10.5 11.5" stroke="#808080" stroke-width="1.3"/>
</svg>
<div style="left:23.0px;top:8px;font-family:'Liberation Sans';font-size:11px;line-height:11px;font-weight:bold;font-style:normal;letter-spacing:0.426px;color:#fff;white-space:pre;">ns5gt:Juniper-ScreenOS 5.4.0r1.0 - Microsoft Internet Explorer</div>
<div style="left:14.0px;top:31px;font-family:'Liberation Sans';font-size:11px;line-height:11px;font-weight:normal;font-style:normal;letter-spacing:-0.133px;color:#000;white-space:pre;"><u>F</u>ájl</div>
<div style="left:46.0px;top:31px;font-family:'Liberation Sans';font-size:11px;line-height:11px;font-weight:normal;font-style:normal;letter-spacing:-0.25px;color:#000;white-space:pre;">S<u>z</u>erkesztés</div>
<div style="left:120.0px;top:31px;font-family:'Liberation Sans';font-size:11px;line-height:11px;font-weight:normal;font-style:normal;letter-spacing:-0.4px;color:#000;white-space:pre;"><u>N</u>ézet</div>
<div style="left:162.0px;top:31px;font-family:'Liberation Sans';font-size:11px;line-height:11px;font-weight:normal;font-style:normal;letter-spacing:-0.162px;color:#000;white-space:pre;">Ked<u>v</u>encek</div>
<div style="left:231.0px;top:31px;font-family:'Liberation Sans';font-size:11px;line-height:11px;font-weight:normal;font-style:normal;letter-spacing:-0.5px;color:#000;white-space:pre;"><u>E</u>szközök</div>
<div style="left:291.0px;top:31px;font-family:'Liberation Sans';font-size:11px;line-height:11px;font-weight:normal;font-style:normal;letter-spacing:-0.5px;color:#000;white-space:pre;"><u>S</u>úgó</div>
<div style="left:37.0px;top:59px;font-family:'Liberation Sans';font-size:11px;line-height:11px;font-weight:normal;font-style:normal;letter-spacing:-0.72px;color:#000;white-space:pre;">Vissza</div>
<div style="left:261.0px;top:59px;font-family:'Liberation Sans';font-size:11px;line-height:11px;font-weight:normal;font-style:normal;letter-spacing:-0.233px;color:#000;white-space:pre;">Keresés</div>
<div style="left:338.0px;top:59px;font-family:'Liberation Sans';font-size:11px;line-height:11px;font-weight:normal;font-style:normal;letter-spacing:-0.1px;color:#000;white-space:pre;">Kedvencek</div>
<div style="left:974.0px;top:59px;font-family:'Liberation Sans';font-size:11px;line-height:11px;font-weight:normal;font-style:normal;letter-spacing:-0.65px;color:#000;white-space:pre;">Links</div>
<div style="left:10.0px;top:87px;font-family:'Liberation Sans';font-size:11px;line-height:11px;font-weight:normal;font-style:normal;letter-spacing:-0.909px;color:#000;white-space:pre;transform:scaleX(0.88);transform-origin:0 0;"><u>C</u>ím</div>
<div style="left:52.0px;top:88px;font-family:'Liberation Sans';font-size:11px;line-height:11px;font-weight:normal;font-style:normal;letter-spacing:0.267px;color:#000;white-space:pre;">http://192.168.1.1/nswebui.html</div>
<div style="left:980.0px;top:87px;font-family:'Liberation Sans';font-size:11px;line-height:11px;font-weight:normal;font-style:normal;letter-spacing:0.075px;color:#000;white-space:pre;">Ugrás</div>
<div style="left:210.85px;top:109px;font-family:'Liberation Sans';font-size:12px;line-height:12px;font-weight:bold;font-style:normal;letter-spacing:0.119px;color:#fff;white-space:pre;transform:scaleX(1.15);transform-origin:0 0;">Policies (From Trust To Untrust)</div>
<div style="left:891.85px;top:109px;font-family:'Liberation Sans';font-size:12px;line-height:12px;font-weight:bold;font-style:normal;letter-spacing:0.598px;color:#fff;white-space:pre;transform:scaleX(1.15);transform-origin:0 0;">ns5gt</div>
<div style="left:69.12px;top:149px;font-family:'Liberation Sans';font-size:28px;line-height:28px;font-weight:bold;font-style:normal;letter-spacing:0.663px;color:#fff;white-space:pre;transform:scaleX(0.88);transform-origin:0 0;-webkit-text-stroke:1.3px #fff;">Juniper</div>
<div style="left:161.0px;top:150px;font-family:'Liberation Sans';font-size:9.5px;line-height:9.5px;font-weight:normal;font-style:normal;letter-spacing:0px;color:#fff;white-space:pre;">®</div>
<div style="left:69.0px;top:174px;font-family:'Liberation Sans';font-size:7.2px;line-height:7.2px;font-weight:bold;font-style:normal;letter-spacing:1.143px;color:#fff;white-space:pre;-webkit-text-stroke:0.5px #fff;">NETWORKS</div>
<div style="left:63.0px;top:196px;font-family:'Liberation Sans';font-size:10.5px;line-height:10.5px;font-weight:bold;font-style:normal;letter-spacing:0.225px;color:#fff;white-space:pre;">TREND</div>
<div style="left:63.0px;top:206px;font-family:'Liberation Sans';font-size:5.5px;line-height:5.5px;font-weight:bold;font-style:normal;letter-spacing:4.0px;color:#fff;white-space:pre;">MICRO</div>
<div style="left:107.0px;top:199px;font-family:'Liberation Sans';font-size:10px;line-height:10px;font-weight:normal;font-style:normal;letter-spacing:0.6px;color:#fff;white-space:pre;">SECURE</div>
<div style="left:53.0px;top:224px;font-family:'Liberation Sans';font-size:11.5px;line-height:11.5px;font-weight:bold;font-style:italic;letter-spacing:-0.167px;color:#fff;white-space:pre;">Juniper-NS5GT</div>
<div style="left:28.0px;top:259px;font-family:'Liberation Sans';font-size:13.5px;line-height:13.5px;font-weight:bold;font-style:normal;letter-spacing:-0.3px;color:#000;white-space:pre;">Home</div>
<div style="left:29.0px;top:277px;font-family:'Liberation Sans';font-size:13.5px;line-height:13.5px;font-weight:bold;font-style:normal;letter-spacing:-0.3px;color:#000;white-space:pre;">Configuration</div>
<div style="left:28.0px;top:295px;font-family:'Liberation Sans';font-size:13.5px;line-height:13.5px;font-weight:bold;font-style:normal;letter-spacing:-0.2px;color:#000;white-space:pre;">Network</div>
<div style="left:28.0px;top:313px;font-family:'Liberation Sans';font-size:13.5px;line-height:13.5px;font-weight:bold;font-style:normal;letter-spacing:-0.112px;color:#000;white-space:pre;">Screening</div>
<div style="left:28.0px;top:331px;font-family:'Liberation Sans';font-size:13.5px;line-height:13.5px;font-weight:bold;font-style:normal;letter-spacing:-0.086px;color:#000;white-space:pre;">Policies</div>
<div style="left:28.0px;top:349px;font-family:'Liberation Sans';font-size:13.5px;line-height:13.5px;font-weight:bold;font-style:normal;letter-spacing:-0.162px;color:#000;white-space:pre;">MCast Policies</div>
<div style="left:29.0px;top:367px;font-family:'Liberation Sans';font-size:13.5px;line-height:13.5px;font-weight:bold;font-style:normal;letter-spacing:-0.767px;color:#000;white-space:pre;">VPNs</div>
<div style="left:29.0px;top:385px;font-family:'Liberation Sans';font-size:13.5px;line-height:13.5px;font-weight:bold;font-style:normal;letter-spacing:-0.45px;color:#000;white-space:pre;">Objects</div>
<div style="left:28.0px;top:403px;font-family:'Liberation Sans';font-size:13.5px;line-height:13.5px;font-weight:bold;font-style:normal;letter-spacing:-0.4px;color:#000;white-space:pre;">Reports</div>
<div style="left:29.0px;top:421px;font-family:'Liberation Sans';font-size:13.5px;line-height:13.5px;font-weight:bold;font-style:normal;letter-spacing:-0.05px;color:#000;white-space:pre;">Wizards</div>
<div style="left:28.0px;top:439px;font-family:'Liberation Sans';font-size:13.5px;line-height:13.5px;font-weight:bold;font-style:normal;letter-spacing:-0.067px;color:#000;white-space:pre;">Help</div>
<div style="left:28.0px;top:457px;font-family:'Liberation Sans';font-size:13.5px;line-height:13.5px;font-weight:bold;font-style:normal;letter-spacing:-0.24px;color:#000;white-space:pre;">Logout</div>
<div style="left:19.0px;top:497px;font-family:'Liberation Sans';font-size:13px;line-height:13px;font-weight:bold;font-style:normal;letter-spacing:0.29px;color:#FFFF00;white-space:pre;">Toggle Menu</div>
<div style="left:246.78px;top:223px;font-family:'Liberation Sans';font-size:12px;line-height:12px;font-weight:bold;font-style:normal;letter-spacing:0.566px;color:#000;white-space:pre;transform:scaleX(1.22);transform-origin:0 0;">Name (optional)</div>
<div style="left:253.78px;top:267px;font-family:'Liberation Sans';font-size:12px;line-height:12px;font-weight:bold;font-style:normal;letter-spacing:0.123px;color:#000;white-space:pre;transform:scaleX(1.22);transform-origin:0 0;">Source Address</div>
<div style="left:220.78px;top:323px;font-family:'Liberation Sans';font-size:12px;line-height:12px;font-weight:bold;font-style:normal;letter-spacing:0.168px;color:#000;white-space:pre;transform:scaleX(1.22);transform-origin:0 0;">Destination Address</div>
<div style="left:312.78px;top:367px;font-family:'Liberation Sans';font-size:12px;line-height:12px;font-weight:bold;font-style:normal;letter-spacing:0.257px;color:#000;white-space:pre;transform:scaleX(1.22);transform-origin:0 0;">Service</div>
<div style="left:287.0px;top:398px;font-family:'Liberation Sans';font-size:12px;line-height:12px;font-weight:bold;font-style:normal;letter-spacing:-0.049px;color:#000;white-space:pre;transform:scaleX(1.22);transform-origin:0 0;">Application</div>
<div style="left:322.0px;top:481px;font-family:'Liberation Sans';font-size:12px;line-height:12px;font-weight:bold;font-style:normal;letter-spacing:-0.121px;color:#000;white-space:pre;transform:scaleX(1.22);transform-origin:0 0;">Action</div>
<div style="left:253.0px;top:512px;font-family:'Liberation Sans';font-size:12px;line-height:12px;font-weight:bold;font-style:normal;letter-spacing:0.059px;color:#000;white-space:pre;transform:scaleX(1.22);transform-origin:0 0;">Antivirus Profile</div>
<div style="left:319.0px;top:542px;font-family:'Liberation Sans';font-size:12px;line-height:12px;font-weight:bold;font-style:normal;letter-spacing:0.105px;color:#000;white-space:pre;transform:scaleX(1.22);transform-origin:0 0;">Tunnel</div>
<div style="left:308.78px;top:629px;font-family:'Liberation Sans';font-size:12px;line-height:12px;font-weight:bold;font-style:normal;letter-spacing:0.066px;color:#000;white-space:pre;transform:scaleX(1.22);transform-origin:0 0;">Logging</div>
<div style="left:394.81px;top:257px;font-family:'Liberation Sans';font-size:12px;line-height:12px;font-weight:normal;font-style:normal;letter-spacing:0.117px;color:#000;white-space:pre;transform:scaleX(1.19);transform-origin:0 0;">New Address</div>
<div style="left:396.0px;top:282px;font-family:'Liberation Sans';font-size:12px;line-height:12px;font-weight:normal;font-style:normal;letter-spacing:-0.007px;color:#000;white-space:pre;transform:scaleX(1.19);transform-origin:0 0;">Address Book Entry</div>
<div style="left:533.0px;top:279px;font-family:'Liberation Sans';font-size:13px;line-height:13px;font-weight:normal;font-style:normal;letter-spacing:0.043px;color:#000;white-space:pre;">Any-IPv6</div>
<div style="left:703.81px;top:278px;font-family:'Liberation Sans';font-size:12px;line-height:12px;font-weight:normal;font-style:normal;letter-spacing:0.198px;color:#000;white-space:pre;transform:scaleX(1.19);transform-origin:0 0;">Multiple</div>
<div style="left:394.81px;top:313px;font-family:'Liberation Sans';font-size:12px;line-height:12px;font-weight:normal;font-style:normal;letter-spacing:0.117px;color:#000;white-space:pre;transform:scaleX(1.19);transform-origin:0 0;">New Address</div>
<div style="left:396.0px;top:338px;font-family:'Liberation Sans';font-size:12px;line-height:12px;font-weight:normal;font-style:normal;letter-spacing:-0.007px;color:#000;white-space:pre;transform:scaleX(1.19);transform-origin:0 0;">Address Book Entry</div>
<div style="left:532.0px;top:335px;font-family:'Liberation Sans';font-size:13px;line-height:13px;font-weight:normal;font-style:normal;letter-spacing:-0.182px;color:#000;white-space:pre;">MIP(2001:738:10:1::/96)</div>
<div style="left:703.81px;top:334px;font-family:'Liberation Sans';font-size:12px;line-height:12px;font-weight:normal;font-style:normal;letter-spacing:0.198px;color:#000;white-space:pre;transform:scaleX(1.19);transform-origin:0 0;">Multiple</div>
<div style="left:379.0px;top:367px;font-family:'Liberation Sans';font-size:13px;line-height:13px;font-weight:normal;font-style:normal;letter-spacing:0.189px;color:#000;white-space:pre;">(Multiple)</div>
<div style="left:600.81px;top:366px;font-family:'Liberation Sans';font-size:12px;line-height:12px;font-weight:normal;font-style:normal;letter-spacing:0.168px;color:#000;white-space:pre;transform:scaleX(1.19);transform-origin:0 0;">Multiple</div>
<div style="left:379.0px;top:397px;font-family:'Liberation Sans';font-size:13px;line-height:13px;font-weight:normal;font-style:normal;letter-spacing:0.333px;color:#000;white-space:pre;">None</div>
<div style="left:376.0px;top:451px;font-family:'Liberation Sans';font-size:12px;line-height:12px;font-weight:normal;font-style:normal;letter-spacing:-0.131px;color:#000;white-space:pre;transform:scaleX(1.19);transform-origin:0 0;">WEB Filtering</div>
<div style="left:379.0px;top:481px;font-family:'Liberation Sans';font-size:13px;line-height:13px;font-weight:normal;font-style:normal;letter-spacing:0.1px;color:#000;white-space:pre;">Permit</div>
<div style="left:482.81px;top:480px;font-family:'Liberation Sans';font-size:12px;line-height:12px;font-weight:normal;font-style:normal;letter-spacing:0.291px;color:#000;white-space:pre;transform:scaleX(1.19);transform-origin:0 0;">Deep Inspection</div>
<div style="left:379.0px;top:511px;font-family:'Liberation Sans';font-size:13px;line-height:13px;font-weight:normal;font-style:normal;letter-spacing:0.333px;color:#000;white-space:pre;">None</div>
<div style="left:381.0px;top:544px;font-family:'Liberation Sans';font-size:12px;line-height:12px;font-weight:normal;font-style:normal;letter-spacing:0.2px;color:#000;white-space:pre;">VPN</div>
<div style="left:415.0px;top:541px;font-family:'Liberation Sans';font-size:13px;line-height:13px;font-weight:normal;font-style:normal;letter-spacing:0.333px;color:#000;white-space:pre;">None</div>
<div style="left:429.81px;top:572px;font-family:'Liberation Sans';font-size:12px;line-height:12px;font-weight:normal;font-style:normal;letter-spacing:0.172px;color:#000;white-space:pre;transform:scaleX(1.19);transform-origin:0 0;">Modify matching bidirectional VPN policy</div>
<div style="left:375.0px;top:602px;font-family:'Liberation Sans';font-size:12px;line-height:12px;font-weight:normal;font-style:normal;letter-spacing:1.267px;color:#000;white-space:pre;">L2TP</div>
<div style="left:416.0px;top:599px;font-family:'Liberation Sans';font-size:13px;line-height:13px;font-weight:normal;font-style:normal;letter-spacing:0.333px;color:#000;white-space:pre;">None</div>
<div style="left:411.0px;top:629px;font-family:'Liberation Sans';font-size:12px;line-height:12px;font-weight:normal;font-style:normal;letter-spacing:0.067px;color:#000;white-space:pre;transform:scaleX(1.19);transform-origin:0 0;">at Session Beginning</div>
<div style="left:409.0px;top:682px;font-family:'Liberation Sans';font-size:12px;line-height:12px;font-weight:normal;font-style:normal;letter-spacing:-0.2px;color:#000;white-space:pre;">OK</div>
<div style="left:498.81px;top:682px;font-family:'Liberation Sans';font-size:12px;line-height:12px;font-weight:normal;font-style:normal;letter-spacing:0.195px;color:#000;white-space:pre;transform:scaleX(1.19);transform-origin:0 0;">Cancel</div>
<div style="left:600.0px;top:682px;font-family:'Liberation Sans';font-size:12px;line-height:12px;font-weight:normal;font-style:normal;letter-spacing:0.028px;color:#000;white-space:pre;transform:scaleX(1.19);transform-origin:0 0;">Advanced</div>
<div style="left:25.0px;top:720px;font-family:'Liberation Sans';font-size:11px;line-height:11px;font-weight:normal;font-style:normal;letter-spacing:-0.167px;color:#000;white-space:pre;">Edit</div>
<div style="left:883.0px;top:720px;font-family:'Liberation Sans';font-size:11px;line-height:11px;font-weight:normal;font-style:normal;letter-spacing:0.471px;color:#000;white-space:pre;">Internet</div>
</body></html>
